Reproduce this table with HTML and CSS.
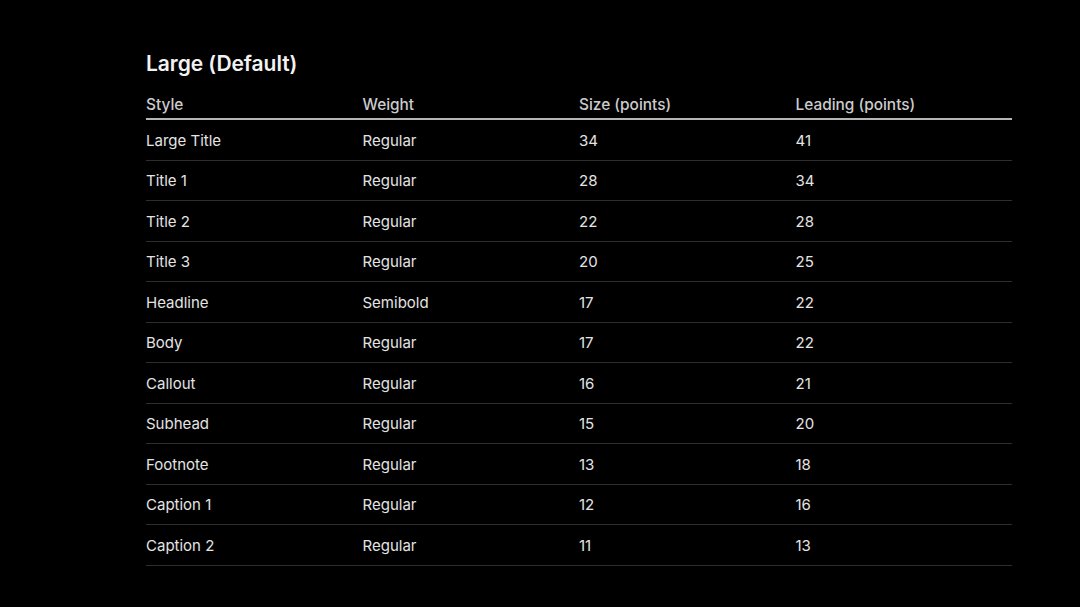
FILE: index.html
```html
<!DOCTYPE html>
<html>
<head>
<meta charset="utf-8">
<link rel="stylesheet" href="styles.css">
</head>
<body>
<main class="page">
  <h1 class="title">Large (Default)</h1>
  <table class="type-table">
    <thead>
      <tr><th>Style</th><th>Weight</th><th>Size (points)</th><th>Leading (points)</th></tr>
    </thead>
    <tbody>
      <tr><td>Large Title</td><td>Regular</td><td>34</td><td>41</td></tr>
      <tr><td>Title 1</td><td>Regular</td><td>28</td><td>34</td></tr>
      <tr><td>Title 2</td><td>Regular</td><td>22</td><td>28</td></tr>
      <tr><td>Title 3</td><td>Regular</td><td>20</td><td>25</td></tr>
      <tr><td>Headline</td><td>Semibold</td><td>17</td><td>22</td></tr>
      <tr><td>Body</td><td>Regular</td><td>17</td><td>22</td></tr>
      <tr><td>Callout</td><td>Regular</td><td>16</td><td>21</td></tr>
      <tr><td>Subhead</td><td>Regular</td><td>15</td><td>20</td></tr>
      <tr><td>Footnote</td><td>Regular</td><td>13</td><td>18</td></tr>
      <tr><td>Caption 1</td><td>Regular</td><td>12</td><td>16</td></tr>
      <tr><td>Caption 2</td><td>Regular</td><td>11</td><td>13</td></tr>
    </tbody>
  </table>
</main>
</body>
</html>
```
FILE: styles.css
```css
html, body {
  margin: 0;
  background: #000;
}
body {
  font-family: Inter, "Noto Sans", "Liberation Sans", sans-serif;
  color: #e6e6e6;
}
.page {
  padding: 51px 0 0 146px;
  width: 866px;
}
.title {
  margin: 0;
  font-size: 21px;
  font-weight: 600;
  line-height: 26px;
  color: #f2f2f2;
  letter-spacing: -0.05px;
}
.type-table {
  margin-top: 16px;
  width: 866px;
  border-collapse: collapse;
  table-layout: fixed;
  font-size: 15px;
}
.type-table th {
  text-align: left;
  font-weight: 500;
  font-size: 15.4px;
  color: #cccccc;
  padding: 1px 0 2px 0;
  height: 22px;
  line-height: 22px;
  border-bottom: 2px solid #b5b5b5;
  box-sizing: content-box;
}
.type-table td {
  padding: 1.5px 0 0 0;
  height: 38px;
  line-height: 20px;
  border-bottom: 1px solid #2e2e2e;
  vertical-align: middle;
  color: #e4e4e4;
}
```
